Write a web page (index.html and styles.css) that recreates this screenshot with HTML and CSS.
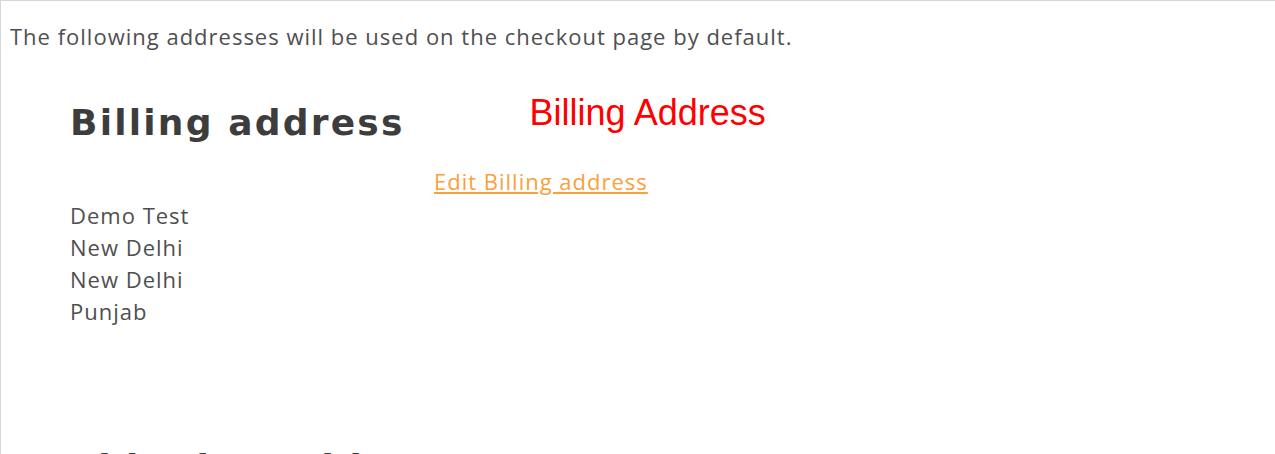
FILE: index.html
```html
<!DOCTYPE html>
<html lang="en">
<head>
    <meta charset="UTF-8">
    <meta name="viewport" content="width=device-width, initial-scale=1.0">
    <title>My Addresses</title>
    <link rel="stylesheet" href="styles.css">
</head>
<body>
    <div class="account-content">
        <p class="intro">The following addresses will be used on the checkout page by default.</p>

        <div class="addresses">
            <div class="address-col">
                <header class="address-title">
                    <h3>Billing address</h3>
                    <span class="custom-label">Billing Address</span>
                    <a href="#" class="edit-link">Edit Billing address</a>
                </header>
                <address>
                    Demo Test<br>
                    New Delhi<br>
                    New Delhi<br>
                    Punjab
                </address>
            </div>

            <div class="address-col">
                <header class="address-title">
                    <h3>Shipping address</h3>
                </header>
            </div>
        </div>
    </div>
</body>
</html>
```

FILE: styles.css
```css
html, body {
    margin: 0;
    padding: 0;
    background: #fff;
    overflow: hidden;
}
body {
    font-family: 'Open Sans', 'Noto Sans', sans-serif;
    color: #4f4f4f;
    font-size: 22px;
    letter-spacing: 1px;
}
.account-content {
    border-top: 1px solid #d6d6d6;
    border-left: 1px solid #d6d6d6;
    min-height: 460px;
    padding: 0 0 0 9px;
}
.intro {
    margin: 0;
    padding-top: 19px;
    line-height: 32px;
}
.addresses {
    padding-left: 60px;
}
.address-col {
    margin-bottom: 70px;
}
.address-title {
    display: flex;
    flex-wrap: wrap;
    align-items: flex-start;
}
.address-title h3 {
    margin: 46px 0 0;
    font-family: 'DejaVu Sans', sans-serif;
    font-size: 36px;
    font-weight: 700;
    letter-spacing: 2.2px;
    line-height: 50px;
    color: #3d3d3d;
}
.custom-label {
    margin: 41px 0 0 125px;
    font-family: 'Liberation Sans', Arial, sans-serif;
    font-size: 36px;
    letter-spacing: 0;
    line-height: 40px;
    color: #ff0000;
}
.edit-link {
    flex-basis: 100%;
    margin: 17px 0 0 364px;
    line-height: 32px;
    color: #f9a13a;
    text-decoration: underline;
}
address {
    margin-top: 2px;
    font-style: normal;
    line-height: 32px;
}
```
